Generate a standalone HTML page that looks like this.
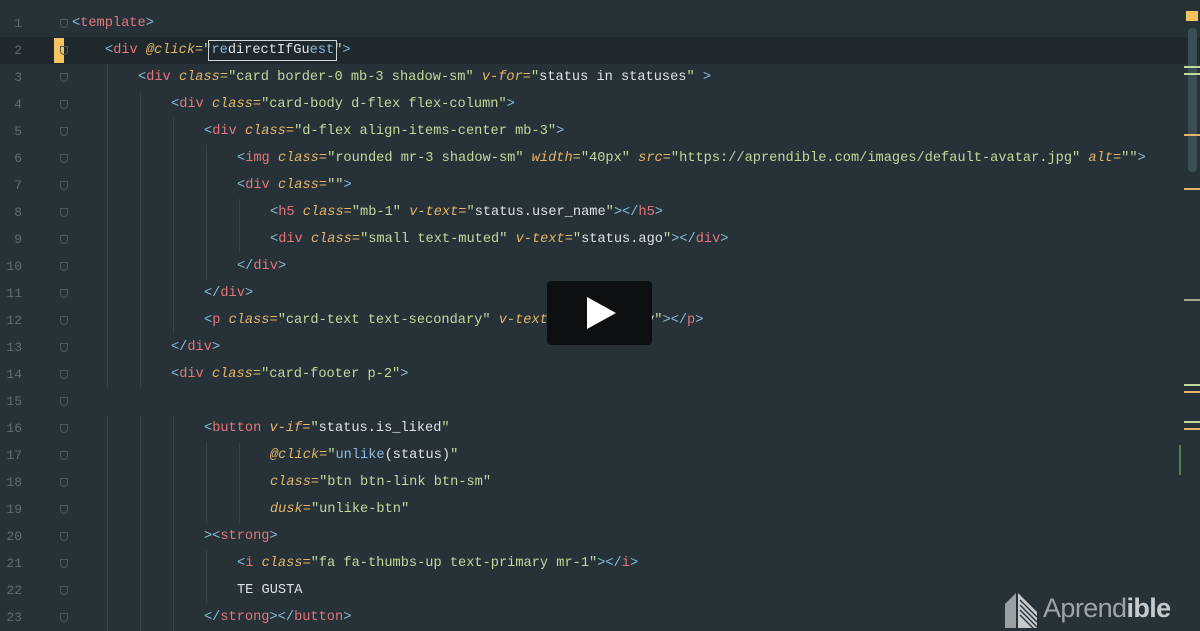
<!DOCTYPE html>
<html><head><meta charset="utf-8"><style>
body{margin:0;width:1200px;height:628px;overflow:hidden;background:#263238;position:relative;font-family:"Liberation Mono",monospace}
.l{position:absolute;left:0;height:27px;line-height:27px;width:1200px;font-size:13.65px;color:#dde3e6;white-space:pre}
.n{position:absolute;left:0;width:22px;text-align:right;color:#5f6d74;font-size:13px}
.c{position:absolute}
.t{color:#e3757c}.b{color:#89bdd9}.a{color:#e5b567;font-style:italic}.s{color:#c2d99c}.w{color:#dde3e6}.f{color:#8fb8dc}
.g{position:absolute;width:1px;background:#34434b}
.fd{position:absolute;left:60px;width:8px;height:9px;border:1px solid #4a575e;border-radius:0 0 4px 4px;box-sizing:border-box}
</style></head><body>
<div style="position:absolute;left:0;top:37px;width:1200px;height:27px;background:#1f282d"></div>
<div style="position:absolute;left:54px;top:38px;width:10px;height:25px;background:#f5c45e"></div>
<div id="code"></div>
<script>
var L=[[0,'<b>&lt;</b><t>template</t><b>&gt;</b>'],
[1,'<b>&lt;</b><t>div</t> <a>@click=</a><s>"</s><span style="outline:1px solid #cfd6da;outline-offset:2px"><f>re</f><w>directIfGu</w><f>est</f></span><s>"</s><b>&gt;</b>'],
[2,'<b>&lt;</b><t>div</t> <a>class=</a><s>"card border-0 mb-3 shadow-sm"</s> <a>v-for=</a><s>"</s><w>status in statuses</w><s>"</s> <b>&gt;</b>'],
[3,'<b>&lt;</b><t>div</t> <a>class=</a><s>"card-body d-flex flex-column"</s><b>&gt;</b>'],
[4,'<b>&lt;</b><t>div</t> <a>class=</a><s>"d-flex align-items-center mb-3"</s><b>&gt;</b>'],
[5,'<b>&lt;</b><t>img</t> <a>class=</a><s>"rounded mr-3 shadow-sm"</s> <a>width=</a><s>"40px"</s> <a>src=</a><s>"https://aprendible.com/images/default-avatar.jpg"</s> <a>alt=</a><s>""</s><b>&gt;</b>'],
[5,'<b>&lt;</b><t>div</t> <a>class=</a><s>""</s><b>&gt;</b>'],
[6,'<b>&lt;</b><t>h5</t> <a>class=</a><s>"mb-1"</s> <a>v-text=</a><s>"</s><w>status.user_name</w><s>"</s><b>&gt;&lt;/</b><t>h5</t><b>&gt;</b>'],
[6,'<b>&lt;</b><t>div</t> <a>class=</a><s>"small text-muted"</s> <a>v-text=</a><s>"</s><w>status.ago</w><s>"</s><b>&gt;&lt;/</b><t>div</t><b>&gt;</b>'],
[5,'<b>&lt;/</b><t>div</t><b>&gt;</b>'],
[4,'<b>&lt;/</b><t>div</t><b>&gt;</b>'],
[4,'<b>&lt;</b><t>p</t> <a>class=</a><s>"card-text text-secondary"</s> <a>v-text=</a><s>"</s><w>status.body</w><s>"</s><b>&gt;&lt;/</b><t>p</t><b>&gt;</b>'],
[3,'<b>&lt;/</b><t>div</t><b>&gt;</b>'],
[3,'<b>&lt;</b><t>div</t> <a>class=</a><s>"card-footer p-2"</s><b>&gt;</b>'],
[0,''],
[4,'<b>&lt;</b><t>button</t> <a>v-if=</a><s>"</s><w>status.is_liked</w><s>"</s>'],
[6,'<a>@click=</a><s>"</s><f>unlike</f><w>(status)</w><s>"</s>'],
[6,'<a>class=</a><s>"btn btn-link btn-sm"</s>'],
[6,'<a>dusk=</a><s>"unlike-btn"</s>'],
[4,'<b>&gt;&lt;</b><t>strong</t><b>&gt;</b>'],
[5,'<b>&lt;</b><t>i</t> <a>class=</a><s>"fa fa-thumbs-up text-primary mr-1"</s><b>&gt;&lt;/</b><t>i</t><b>&gt;</b>'],
[5,'<w>TE GUSTA</w>'],
[4,'<b>&lt;/</b><t>strong</t><b>&gt;&lt;/</b><t>button</t><b>&gt;</b>']];
var h='';
L.forEach(function(x,i){var top=10+i*27;
var s=x[1].replace(/<(\/?)([tbaswf])>/g,function(m,c,k){return c?'</span>':'<span class="'+k+'">'});
h+='<div class="l" style="top:'+top+'px"><span class="n">'+(i+1)+'</span><span class="c" style="left:'+(72+x[0]*33)+'px">'+s+'</span></div>';
h+='<div class="fd" style="top:'+(top+9)+'px"></div>';
for(var k=1;k<x[0];k++){h+='<div class="g" style="left:'+(72+k*33+2)+'px;top:'+top+'px;height:27px"></div>';}
});
document.getElementById('code').innerHTML=h;
</script>
<div style="position:absolute;left:547px;top:281px;width:105px;height:64px;background:#0d1012;border-radius:4px"></div>
<svg style="position:absolute;left:585px;top:296px" width="32" height="34"><polygon points="2,1 31,17 2,33" fill="#fff"/></svg>
<div style="position:absolute;left:1188px;top:28px;width:9px;height:144px;background:#3a4d55;border-radius:4px"></div>
<div style="position:absolute;left:1186px;top:11px;width:12px;height:10px;background:#f5c45e"></div>
<div style="position:absolute;left:1184px;top:66px;width:16px;height:2px;background:#c2d99c"></div>
<div style="position:absolute;left:1184px;top:73px;width:16px;height:2px;background:#c2d99c"></div>
<div style="position:absolute;left:1184px;top:134px;width:16px;height:2px;background:#e5b567"></div>
<div style="position:absolute;left:1184px;top:188px;width:16px;height:2px;background:#e5b567"></div>
<div style="position:absolute;left:1184px;top:299px;width:16px;height:2px;background:#a4aa8c"></div>
<div style="position:absolute;left:1184px;top:384px;width:16px;height:2px;background:#c2d99c"></div>
<div style="position:absolute;left:1184px;top:391px;width:16px;height:2px;background:#e5b567"></div>
<div style="position:absolute;left:1184px;top:421px;width:16px;height:2px;background:#c2d99c"></div>
<div style="position:absolute;left:1184px;top:428px;width:16px;height:2px;background:#e5b567"></div>
<div style="position:absolute;left:1179px;top:445px;width:2px;height:30px;background:#5a7a5a"></div>
<svg style="position:absolute;left:1004px;top:590px" width="34" height="38"><polygon points="1,14 12,3 12,38 1,38" fill="#9aa1a5"/><polygon points="14,3 33,22 33,38 14,38" fill="#c5cacd"/><g stroke="#263238" stroke-width="1.3"><line x1="16" y1="10" x2="33" y2="27"/><line x1="16" y1="15" x2="33" y2="32"/><line x1="16" y1="20" x2="33" y2="37"/><line x1="16" y1="25" x2="30" y2="39"/></g></svg>
<div style="position:absolute;left:1043px;top:593px;font-family:'Liberation Sans',sans-serif;font-size:27px;color:#9ea5a9;letter-spacing:-0.6px">Aprend<b style="color:#c5cacd">ible</b></div>
</body></html>
